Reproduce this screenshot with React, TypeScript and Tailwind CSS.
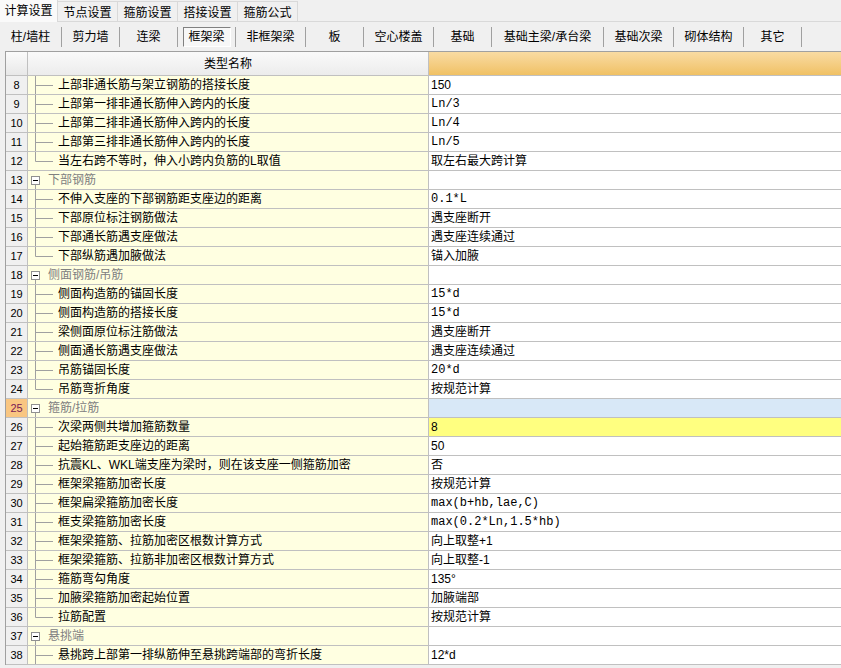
const tabs = ['计算设置', '节点设置', '箍筋设置', '搭接设置', '箍筋公式'];

const tools: { label: string; w: string; active?: boolean }[] = [
  { label: '柱/墙柱', w: 'w-[62px]' },
  { label: '剪力墙', w: 'w-[58px]' },
  { label: '连梁', w: 'w-[58px]' },
  { label: '框架梁', w: 'w-[58px]', active: true },
  { label: '非框架梁', w: 'w-[70px]' },
  { label: '板', w: 'w-[58px]' },
  { label: '空心楼盖', w: 'w-[70px]' },
  { label: '基础', w: 'w-[58px]' },
  { label: '基础主梁/承台梁', w: 'w-[112px]' },
  { label: '基础次梁', w: 'w-[70px]' },
  { label: '砌体结构', w: 'w-[70px]' },
  { label: '其它', w: 'w-[58px]' },
];

type Row = {
  n: number;
  name: string;
  value?: string;
  section?: boolean;
  last?: boolean;
  mono?: boolean;
  selected?: boolean;
  edit?: boolean;
};

const rows: Row[] = [
  { n: 8, name: '上部非通长筋与架立钢筋的搭接长度', value: '150' },
  { n: 9, name: '上部第一排非通长筋伸入跨内的长度', value: 'Ln/3', mono: true },
  { n: 10, name: '上部第二排非通长筋伸入跨内的长度', value: 'Ln/4', mono: true },
  { n: 11, name: '上部第三排非通长筋伸入跨内的长度', value: 'Ln/5', mono: true },
  { n: 12, name: '当左右跨不等时，伸入小跨内负筋的L取值', value: '取左右最大跨计算', last: true },
  { n: 13, name: '下部钢筋', section: true },
  { n: 14, name: '不伸入支座的下部钢筋距支座边的距离', value: '0.1*L', mono: true },
  { n: 15, name: '下部原位标注钢筋做法', value: '遇支座断开' },
  { n: 16, name: '下部通长筋遇支座做法', value: '遇支座连续通过' },
  { n: 17, name: '下部纵筋遇加腋做法', value: '锚入加腋', last: true },
  { n: 18, name: '侧面钢筋/吊筋', section: true },
  { n: 19, name: '侧面构造筋的锚固长度', value: '15*d', mono: true },
  { n: 20, name: '侧面构造筋的搭接长度', value: '15*d', mono: true },
  { n: 21, name: '梁侧面原位标注筋做法', value: '遇支座断开' },
  { n: 22, name: '侧面通长筋遇支座做法', value: '遇支座连续通过' },
  { n: 23, name: '吊筋锚固长度', value: '20*d', mono: true },
  { n: 24, name: '吊筋弯折角度', value: '按规范计算', last: true },
  { n: 25, name: '箍筋/拉筋', section: true, selected: true },
  { n: 26, name: '次梁两侧共增加箍筋数量', value: '8', edit: true },
  { n: 27, name: '起始箍筋距支座边的距离', value: '50' },
  { n: 28, name: '抗震KL、WKL端支座为梁时，则在该支座一侧箍筋加密', value: '否' },
  { n: 29, name: '框架梁箍筋加密长度', value: '按规范计算' },
  { n: 30, name: '框架扁梁箍筋加密长度', value: 'max(b+hb,lae,C)', mono: true },
  { n: 31, name: '框支梁箍筋加密长度', value: 'max(0.2*Ln,1.5*hb)', mono: true },
  { n: 32, name: '框架梁箍筋、拉筋加密区根数计算方式', value: '向上取整+1' },
  { n: 33, name: '框架梁箍筋、拉筋非加密区根数计算方式', value: '向上取整-1' },
  { n: 34, name: '箍筋弯勾角度', value: '135°' },
  { n: 35, name: '加腋梁箍筋加密起始位置', value: '加腋端部' },
  { n: 36, name: '拉筋配置', value: '按规范计算', last: true },
  { n: 37, name: '悬挑端', section: true },
  { n: 38, name: '悬挑跨上部第一排纵筋伸至悬挑跨端部的弯折长度', value: '12*d' },
];

function TreeMark({ row }: { row: Row }) {
  if (row.section) {
    return (
      <svg width="20" height="18" className="shrink-0">
        <line x1="7.5" y1="14" x2="7.5" y2="18" stroke="#a0a0a0" />
        <rect x="3.5" y="5.5" width="8" height="8" fill="#fff" stroke="#909090" />
        <line x1="5" y1="9.5" x2="10" y2="9.5" stroke="#000" />
      </svg>
    );
  }
  return (
    <svg width="30" height="18" className="shrink-0">
      <line x1="7.5" y1="0" x2="7.5" y2={row.last ? 9.5 : 18} stroke="#a0a0a0" />
      <line x1="7.5" y1="9.5" x2="25" y2="9.5" stroke="#a0a0a0" />
    </svg>
  );
}

export default function App() {
  return (
    <div
      className="h-[668px] w-[841px] overflow-hidden bg-[#f0f0f0] text-[12px] text-black"
      style={{ fontFamily: '"Liberation Sans", "Noto Sans CJK SC", sans-serif' }}
    >
      {/* tab strip */}
      <div className="flex h-[22px] items-end border-b border-[#d9d9d9]">
        {tabs.map((t, i) =>
          i === 0 ? (
            <div key={t} className="-mb-px flex h-[22px] w-[58px] items-center justify-center border-r border-[#d9d9d9] bg-[#fafafa] pb-[1px]">
              {t}
            </div>
          ) : (
            <div key={t} className="flex h-[20px] w-[60px] items-center justify-center border-r border-t border-[#d9d9d9] bg-[#f0f0f0] pt-[2px]">
              {t}
            </div>
          ),
        )}
      </div>

      {/* beam type toolbar */}
      <div className="flex h-[29px] items-center">
        {tools.map((t) => (
          <div key={t.label} className={`flex h-[20px] items-center ${t.w}`}>
            <div className="flex flex-1 items-center justify-center">
              {t.active ? (
                <span className="flex h-[20px] w-[48px] items-center justify-center border border-b-white border-l-[#808080] border-r-white border-t-[#808080] bg-[#f7f7f7]">
                  {t.label}
                </span>
              ) : (
                t.label
              )}
            </div>
            <div className="h-[20px] w-px bg-[#a0a0a0]" />
          </div>
        ))}
      </div>

      {/* grid */}
      <div className="ml-[5px] border-l border-t border-[#a0a0a0]">
        <div className="flex h-[24px] border-b border-[#c0c0c0]">
          <div className="w-[22px] border-r border-[#c0c0c0] bg-gradient-to-b from-[#fbfbfb] to-[#e8e8e8]" />
          <div className="flex w-[401px] items-center justify-center border-r border-[#c0c0c0] bg-gradient-to-b from-[#fafafa] to-[#ececec]">
            类型名称
          </div>
          <div className="flex-1 bg-gradient-to-b from-[#f9dba2] to-[#f0c164]" />
        </div>

        {rows.map((r) => (
          <div key={r.n} className="flex h-[19px] border-b border-[#c0c0c0]">
            <div
              className={`flex w-[22px] items-center justify-center border-r border-[#c0c0c0] text-[11px] ${
                r.selected ? 'bg-[#f9c681] text-[#7a1a55]' : 'bg-[#f0f0f0]'
              }`}
            >
              {r.n}
            </div>
            <div className="flex w-[401px] items-center overflow-hidden whitespace-nowrap border-r border-[#c0c0c0] bg-[#ffffe1]">
              <TreeMark row={r} />
              <span className={r.section ? 'text-[#808080]' : ''}>{r.name}</span>
            </div>
            <div
              className={`flex flex-1 items-center whitespace-nowrap pl-[2px] ${
                r.selected ? 'bg-[#d8e8f7]' : r.edit ? 'bg-[#ffff80]' : 'bg-white'
              }`}
              style={r.mono ? { fontFamily: '"Liberation Mono", monospace' } : undefined}
            >
              {r.value}
            </div>
          </div>
        ))}
      </div>
    </div>
  );
}
